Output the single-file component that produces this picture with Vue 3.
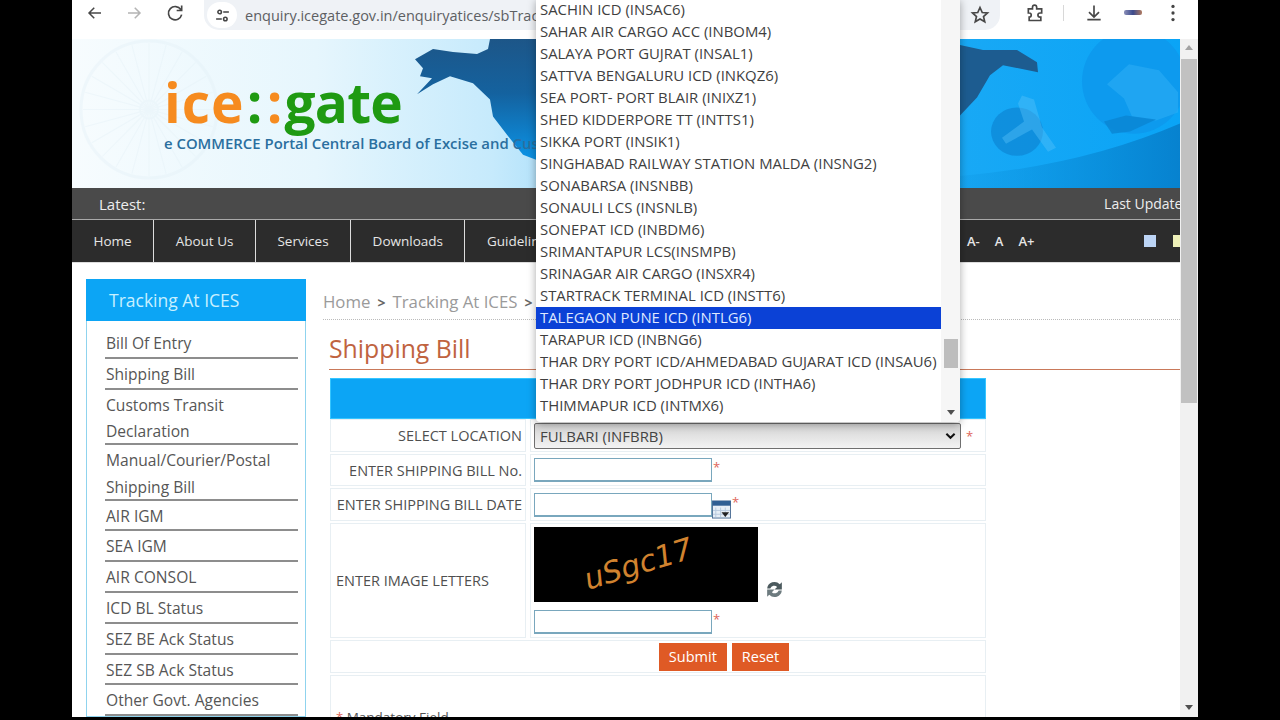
<template>
  <div class="stage">
    <div class="toolbar">
      <svg class="tb-icon back" viewBox="0 0 24 24"><path d="M20 12H5M11 5l-7 7 7 7" /></svg>
      <svg class="tb-icon fwd" viewBox="0 0 24 24"><path d="M4 12h15M13 5l7 7-7 7" /></svg>
      <svg class="tb-icon reload" viewBox="0 0 24 24"><path d="M19 8a8 8 0 1 0 1 6M20 3v6h-6" /></svg>
      <div class="omnibox">
        <span class="tune">
          <svg viewBox="0 0 24 24"><circle cx="8" cy="7" r="2.500" /><path d="M13 7h8M3 17h8" /><circle cx="16" cy="17" r="2.500" /></svg>
        </span>
        <span class="url">enquiry.icegate.gov.in/enquiryatices/sbTrack</span>
        <svg class="tb-icon star" viewBox="0 0 24 24"><path d="M12 3l2.700 6 6.300.6-4.800 4.200 1.500 6.400L12 16.800 6.300 20.200l1.500-6.400L3 9.600 9.300 9z" /></svg>
      </div>
      <div class="tb-right">
        <svg class="tb-icon" viewBox="0 0 24 24"><path d="M4 7h5V5a2.500 2.500 0 0 1 5 0v2h6v5h-2a2.500 2.500 0 0 0 0 5h1v4H5v-4a2.500 2.500 0 0 0 0-5H4z" /></svg>
        <i class="tb-sep"></i>
        <svg class="tb-icon" viewBox="0 0 24 24"><path d="M12 3v13M6 11l6 6 6-6M4 20h16" /></svg>
        <span class="profile"></span>
        <svg class="dots" viewBox="0 0 6 22"><circle cx="3" cy="3" r="2" /><circle cx="3" cy="11" r="2" /><circle cx="3" cy="19" r="2" /></svg>
      </div>
    </div>

    <div class="window">
      <div class="page">
        <header class="banner">
          <svg class="banner-art" viewBox="0 0 1108 148" preserveAspectRatio="none">
            <defs>
              <linearGradient id="land" x1="0" y1="0" x2="0" y2="1">
                <stop offset="0" stop-color="#1d5688" />
                <stop offset=".45" stop-color="#14629f" />
                <stop offset="1" stop-color="#0b93e6" />
              </linearGradient>
              <linearGradient id="swoosh" x1="0" y1="0" x2="1" y2="0">
                <stop offset="0" stop-color="#0a8ed9" stop-opacity=".15" />
                <stop offset="1" stop-color="#0782cf" />
              </linearGradient>
            </defs>
            <g fill="none" stroke="#e4f1f8" opacity=".4">
              <circle cx="77" cy="70" r="68" stroke-width="3" />
              <circle cx="77" cy="70" r="9" stroke-width="2" />
              <path v-for="a in spokes" :key="a" :d="a" stroke-width="1" />
            </g>
            <path d="M343 20L361 10 381 13 405 15 416 10 418 0H464V120L451 115 435 95 421 77 418 60 401 44 378 37 361 45 345 55 360 39 348 37 351 29z" fill="url(#land)" />
            <path d="M888 6L911 11 945 11 965 23 966 33 931 26 918 36 905 58 888 76z" fill="#1d5c90" />
            <circle cx="1062" cy="42" r="52" fill="#0d9aee" />
            <path d="M1035 45l22-20 30 6 19 22v20l-22 8-24-4-8-18z" fill="#36b4f7" opacity=".45" />
            <path d="M1032 82l22-6 30 4-26 12-18 2z" fill="#0a84d2" opacity=".8" />
            <ellipse cx="945" cy="92" rx="26" ry="24" fill="#0e8ad8" opacity=".8" />
            <path d="M950 56l12 4 8 28 14 20-8 4-16-22-26 14-4-6 22-16-6-18z" fill="#5ac4f9" opacity=".4" />
            <path d="M888 136Q1010 126 1108 84V148H888z" fill="url(#swoosh)" />
          </svg>
          <div class="logo"><b class="or">ice</b><b class="gr dot">:</b><b class="or dot">:</b><b class="gr gate">gate</b></div>
          <div class="tag">e COMMERCE Portal Central Board of Excise and Customs</div>
        </header>

        <div class="latest">
          <span>Latest:</span>
          <span class="updated">Last Updated</span>
        </div>

        <nav class="nav">
          <a v-for="n in navItems" :key="n">{{ n }}</a>
          <div class="nav-tools">
            <span>A-</span><span>A</span><span>A+</span>
            <i class="sq blue"></i><i class="sq yellow"></i>
          </div>
        </nav>

        <div class="content">
          <aside class="side">
            <h3>Tracking At ICES</h3>
            <ul>
              <li v-for="s in sideItems" :key="s" :class="{ two: s.length > 20 }">{{ s }}</li>
            </ul>
          </aside>

          <main class="main">
            <div class="crumb">Home<b>&gt;</b>Tracking At ICES<b>&gt;</b>Shipping Bill</div>
            <h2>Shipping Bill</h2>
            <div class="form">
              <div class="form-head"></div>
              <div class="row r-sel">
                <label>SELECT LOCATION</label>
                <div class="val">
                  <div class="select">FULBARI (INFBRB)
                    <svg viewBox="0 0 12 8"><path d="M1.500 1.500L6 6l4.500-4.500" /></svg>
                  </div>
                  <em>*</em>
                </div>
              </div>
              <div class="row r-inp">
                <label>ENTER SHIPPING BILL No.</label>
                <div class="val"><input type="text" /><em class="up">*</em></div>
              </div>
              <div class="row r-date">
                <label>ENTER SHIPPING BILL DATE</label>
                <div class="val">
                  <input type="text" />
                  <svg class="cal" viewBox="0 0 20 20">
                    <rect x=".5" y="1" width="19" height="18" fill="#e6eef6" stroke="#4d6f96" />
                    <rect x=".5" y="1" width="19" height="5" fill="#2f5f93" />
                    <path d="M4 8v10M9 8v10M14 8v10M1 11h18M1 15h18" stroke="#b7cade" />
                    <path d="M10 13h8l-4 5z" fill="#222" />
                  </svg>
                  <em class="up">*</em>
                </div>
              </div>
              <div class="row r-cap">
                <label>ENTER IMAGE LETTERS</label>
                <div class="val col">
                  <div class="cap-line">
                    <div class="captcha"><span>uSgc17</span></div>
                    <svg class="refresh" viewBox="0 0 20 20">
                      <path d="M3 9a7 7 0 0 1 12-4l2-2v7h-7l2.500-2.500A4 4 0 0 0 6 9z" fill="#4c5a5e" />
                      <path d="M17 11a7 7 0 0 1-12 4l-2 2v-7h7l-2.500 2.500A4 4 0 0 0 14 11z" fill="#6d7b7f" />
                    </svg>
                  </div>
                  <div class="cap-input"><input type="text" /><em class="up">*</em></div>
                </div>
              </div>
              <div class="row-full buttons">
                <button>Submit</button><button>Reset</button>
              </div>
              <div class="row-full mandatory"><span><em>*</em> Mandatory Field</span></div>
            </div>
          </main>
        </div>
      </div>

      <div class="scrollbar">
        <i class="arr-up"></i>
        <div class="thumb"></div>
        <i class="arr-down"></i>
      </div>

      <div class="dropdown">
        <ul>
          <li v-for="o in options" :key="o" :class="{ on: o.includes('INTLG6') }">{{ o }}</li>
        </ul>
        <div class="dd-scroll"><div class="dd-thumb"></div><i class="arr-down"></i></div>
      </div>
    </div>
  </div>
</template>

<script setup>
const navItems = ["Home", "About Us", "Services", "Downloads", "Guidelines"];

const sideItems = [
  "Bill Of Entry",
  "Shipping Bill",
  "Customs Transit Declaration",
  "Manual/Courier/Postal Shipping Bill",
  "AIR IGM",
  "SEA IGM",
  "AIR CONSOL",
  "ICD BL Status",
  "SEZ BE Ack Status",
  "SEZ SB Ack Status",
  "Other Govt. Agencies",
];

const options = [
  "SACHIN ICD (INSAC6)",
  "SAHAR AIR CARGO ACC (INBOM4)",
  "SALAYA PORT GUJRAT (INSAL1)",
  "SATTVA BENGALURU ICD (INKQZ6)",
  "SEA PORT- PORT BLAIR (INIXZ1)",
  "SHED KIDDERPORE TT (INTTS1)",
  "SIKKA PORT (INSIK1)",
  "SINGHABAD RAILWAY STATION MALDA (INSNG2)",
  "SONABARSA (INSNBB)",
  "SONAULI LCS (INSNLB)",
  "SONEPAT ICD (INBDM6)",
  "SRIMANTAPUR LCS(INSMPB)",
  "SRINAGAR AIR CARGO (INSXR4)",
  "STARTRACK TERMINAL ICD (INSTT6)",
  "TALEGAON PUNE ICD (INTLG6)",
  "TARAPUR ICD (INBNG6)",
  "THAR DRY PORT ICD/AHMEDABAD GUJARAT ICD (INSAU6)",
  "THAR DRY PORT JODHPUR ICD (INTHA6)",
  "THIMMAPUR ICD (INTMX6)",
];

// faint wheel behind the logo
const spokes = [];
for (let i = 0; i < 24; i++) {
  const t = (i * Math.PI) / 12;
  const x = 77 + Math.cos(t) * 66;
  const y = 70 + Math.sin(t) * 66;
  spokes.push("M77 70L" + x.toFixed(1) + " " + y.toFixed(1));
}
</script>

<style>
html,
body {
  margin: 0;
  background: #000;
}
</style>

<style scoped>
* {
  box-sizing: border-box;
}

.stage {
  width: 1126px;
  height: 717px;
  margin-left: 72px;
  background: #fff;
  overflow: hidden;
  display: flex;
  flex-direction: column;
  font-family: "Open Sans", "Noto Sans", sans-serif;
  color: #4a4a4a;
}

.toolbar {
  height: 38px;
  flex: none;
  display: flex;
  align-items: flex-start;
  padding-left: 14px;
  background: #fff;
}

.tb-icon {
  width: 20px;
  height: 20px;
  margin-top: 3px;
  fill: none;
  stroke: #474747;
  stroke-width: 2;
  flex: none;
}
.tb-icon.back {
  width: 18px;
}
.fwd {
  margin-left: 21px;
  stroke: #b4b4b4;
  width: 18px;
}
.reload {
  margin-left: 22px;
}

.omnibox {
  margin-left: 19px;
  width: 796px;
  height: 30px;
  border-radius: 0 0 15px 15px;
  background: #eff2f6;
  display: flex;
  align-items: center;
  position: relative;
  padding-right: 10px;
}
.tune {
  width: 30px;
  height: 26px;
  margin-left: 3px;
  border-radius: 13px;
  background: #fff;
  display: flex;
  align-items: center;
  justify-content: center;
}
.tune svg {
  width: 17px;
  height: 17px;
  fill: none;
  stroke: #444;
  stroke-width: 2.2;
}
.url {
  margin-left: 8px;
  font-size: 14.5px;
  color: #5d6063;
  white-space: nowrap;
}
.star {
  margin: 0 0 0 auto;
  stroke-width: 2;
}

.tb-right {
  display: flex;
  align-items: flex-start;
  margin-left: 25px;
}
.tb-sep {
  width: 1px;
  height: 16px;
  margin: 5px 20px 0 18px;
  background: #d8d8d8;
}
.profile {
  width: 18px;
  height: 5px;
  margin: 10px 0 0 20px;
  background: linear-gradient(90deg, #8b8fb8, #3b4a8c, #b07a60);
  border-radius: 2px;
}
.dots {
  width: 6px;
  height: 18px;
  margin: 4px 0 0 28px;
  fill: #444;
}

.window {
  flex: 1;
  display: flex;
  position: relative;
  min-height: 0;
}

.page {
  width: 1108px;
  flex: none;
  overflow: hidden;
}

.banner {
  height: 149px;
  margin-top: 1px;
  padding: 35px 0 0 92px;
  background: linear-gradient(90deg, #f7fcfe 0, #e6f6fd 22%, #c6eafc 38%, #a5dcfa 46%, #1aa9f5 78%, #0aa4f6 100%);
  position: relative;
  overflow: hidden;
}
.banner-art {
  position: absolute;
  inset: 0;
  width: 100%;
  height: 100%;
}
.logo {
  position: relative;
  font-family: "Open Sans", sans-serif;
  font-size: 55px;
  line-height: 56px;
  letter-spacing: 1px;
  white-space: nowrap;
}
.logo b {
  font-weight: 700;
}
.logo .dot {
  display: inline-block;
  width: 20px;
  text-align: center;
  letter-spacing: 0;
}
.logo .gate {
  letter-spacing: -0.8px;
}
.or {
  color: #f68b1f;
}
.gr {
  color: #1f9a12;
}
.tag {
  position: relative;
  margin-top: 3px;
  font-size: 14.9px;
  font-weight: 600;
  color: #2b6f9f;
  white-space: nowrap;
}

.latest {
  height: 32px;
  background: #4a4a4a;
  color: #eee;
  display: flex;
  align-items: center;
  justify-content: space-between;
  padding-left: 27px;
  font-size: 15px;
  overflow: hidden;
  white-space: nowrap;
  border-bottom: 1px solid #aaa;
}
.updated {
  font-size: 14px;
  margin-right: -11px;
  font-weight: 500;
}

.nav {
  height: 43px;
  background: #2c2c2c;
  display: flex;
  align-items: stretch;
  color: #e6e6e6;
  font-size: 13.5px;
  font-weight: 500;
  border-bottom: 1px solid #ddd;
}
.nav a {
  display: flex;
  align-items: center;
  padding: 0 21.5px;
  border-right: 1px solid #ddd;
}
.nav a:last-of-type {
  border-right: 0;
}
.nav-tools {
  margin-left: auto;
  width: 213px;
  display: flex;
  align-items: center;
  gap: 15px;
  font-size: 13px;
  font-weight: 600;
}
.sq {
  width: 12px;
  height: 12px;
  display: block;
  flex: none;
}
.sq.blue {
  background: #bcd4f5;
  margin-left: 95px;
}
.sq.yellow {
  background: #eef0b8;
  width: 7px;
  margin-left: 2px;
}

.content {
  display: flex;
  align-items: flex-start;
  padding: 17px 0 0 14px;
}

.side {
  width: 220px;
  flex: none;
  border: 1px solid #8fd3ee;
  border-top: 0;
}
.side h3 {
  margin: -1px -1px 0;
  height: 42px;
  background: #0ca5f5;
  color: #c8f0ff;
  font-size: 17.5px;
  font-weight: 400;
  line-height: 42px;
  padding-left: 23px;
}
.side ul {
  list-style: none;
  margin: 0;
  padding: 7px 7px 0 18px;
}
.side li {
  height: 30.8px;
  line-height: 30px;
  border-bottom: 2px solid #8d8d8d;
  padding-left: 1px;
  font-size: 15.6px;
  color: #565656;
  white-space: nowrap;
}
.side li.two {
  height: 55.5px;
  padding: 2px 20px 0 1px;
  line-height: 26.5px;
  white-space: normal;
}

.main {
  width: 857px;
  flex: none;
  margin-left: 17px;
}
.crumb {
  margin-top: 8px;
  padding-bottom: 2px;
  font-size: 16.8px;
  color: #9a9a9a;
  line-height: 28px;
  white-space: nowrap;
  border-bottom: 1px dotted #bbb;
}
.crumb b {
  margin: 0 7px;
  color: #666;
  font-size: 14px;
}
.main h2 {
  margin: 14px 0 0 6px;
  height: 36px;
  font-size: 24.8px;
  font-weight: 400;
  line-height: 28px;
  color: #c0633f;
  border-bottom: 1px solid #c9795a;
}

.form {
  margin: 8px 0 0 7px;
  width: 656px;
}
.form-head {
  height: 41px;
  background: #0ca5f5;
  border: 1px solid #35c5ff;
}
.row {
  display: flex;
  gap: 4px;
  margin-top: 2px;
}
.r-sel {
  margin-top: 0;
  height: 33px;
}
.row label {
  width: 196px;
  flex: none;
  border: 1px solid #e8eff3;
  display: flex;
  align-items: center;
  justify-content: flex-end;
  padding: 0 3px 0 0;
  font-size: 14.5px;
  color: #4f4f4f;
  white-space: nowrap;
}
.row .val {
  flex: 1;
  border: 1px solid #e8eff3;
  display: flex;
  align-items: center;
  padding-left: 3px;
}
.r-inp {
  height: 32px;
}
.r-date {
  height: 33px;
}
.r-cap {
  height: 115px;
}
.r-cap label {
  justify-content: flex-start;
  padding-left: 5px;
}
.val.col {
  flex-direction: column;
  align-items: flex-start;
}
.select {
  width: 427px;
  height: 26px;
  border: 1px solid #6f6f6f;
  border-radius: 2px;
  background: linear-gradient(#d2d2d2, #f3f3f3);
  font-size: 14.9px;
  line-height: 24px;
  padding-left: 5px;
  display: flex;
  justify-content: space-between;
  align-items: center;
  color: #444;
}
.select svg {
  width: 11px;
  height: 8px;
  margin-right: 4px;
  fill: none;
  stroke: #111;
  stroke-width: 2.2;
}
.val input,
.cap-input input {
  width: 178px;
  height: 24px;
  border: 1px solid #79a7bd;
  border-bottom-width: 2px;
  background: #fff;
  padding: 0;
  flex: none;
}
em {
  color: #e0675a;
  font-style: normal;
  font-size: 13px;
  margin-left: 5px;
}
em.up {
  margin: -6px 0 0 1px;
}
.cal {
  width: 19px;
  height: 19px;
  flex: none;
  margin-top: 10px;
}
.cap-line {
  display: flex;
  align-items: flex-end;
  margin-top: 3px;
}
.captcha {
  width: 224px;
  height: 75px;
  background: #000;
  display: flex;
  align-items: center;
  justify-content: center;
  overflow: hidden;
}
.captcha span {
  display: block;
  font-family: "DejaVu Sans", sans-serif;
  font-size: 30px;
  font-style: italic;
  color: #d1832f;
  transform: rotate(-17deg) translate(-7px, -3px);
}
.refresh {
  width: 21px;
  height: 21px;
  margin: 0 0 2px 6px;
}
.cap-input {
  display: flex;
  align-items: center;
  margin-top: 8px;
}

.row-full {
  border: 1px solid #e8eff3;
  margin-top: 2px;
}
.buttons {
  height: 33px;
  display: flex;
  justify-content: center;
  align-items: center;
  gap: 5px;
  padding-left: 132px;
}
.buttons button {
  height: 28px;
  padding: 0 10px;
  border: 0;
  background: #df5a25;
  color: #fff;
  font-family: inherit;
  font-size: 14.5px;
}
.mandatory {
  height: 60px;
  padding: 32px 0 0 5px;
  font-size: 13.5px;
  color: #555;
}
.mandatory em {
  margin: 0;
}

.scrollbar {
  width: 18px;
  flex: none;
  margin-top: 1px;
  background: #f1f1f1;
  position: relative;
}
.thumb {
  position: absolute;
  left: 1px;
  right: 1px;
  top: 20px;
  height: 344px;
  background: #c1c1c1;
}
.arr-up,
.arr-down {
  position: absolute;
  left: 50%;
  margin-left: -4px;
  width: 0;
  height: 0;
  border-left: 4px solid transparent;
  border-right: 4px solid transparent;
}
.arr-up {
  top: 6px;
  border-bottom: 5px solid #a3a3a3;
}
.arr-down {
  bottom: 7px;
  border-top: 5px solid #505050;
}

/* open list sits over the form, so it is taken out of flow */
.dropdown {
  position: absolute;
  left: 464px;
  top: -39px;
  width: 424px;
  height: 423px;
  background: #fff;
  border-radius: 0 0 4px 4px;
  box-shadow: 0 2px 8px rgba(0, 0, 0, 0.35);
  display: flex;
  overflow: hidden;
  z-index: 3;
}
.dropdown ul {
  list-style: none;
  margin: 0;
  padding: 0;
  width: 405px;
  flex: none;
}
.dropdown li {
  height: 22px;
  line-height: 20px;
  padding-left: 4px;
  font-size: 14.9px;
  color: #3f3f3f;
  white-space: nowrap;
}
.dropdown li.on {
  background: #0b41d6;
  color: #dfe8ff;
}
.dd-scroll {
  flex: 1;
  background: #f6f6f6;
  position: relative;
}
.dd-thumb {
  position: absolute;
  left: 3px;
  right: 2px;
  top: 340px;
  height: 29px;
  background: #bdbdbd;
}
</style>
